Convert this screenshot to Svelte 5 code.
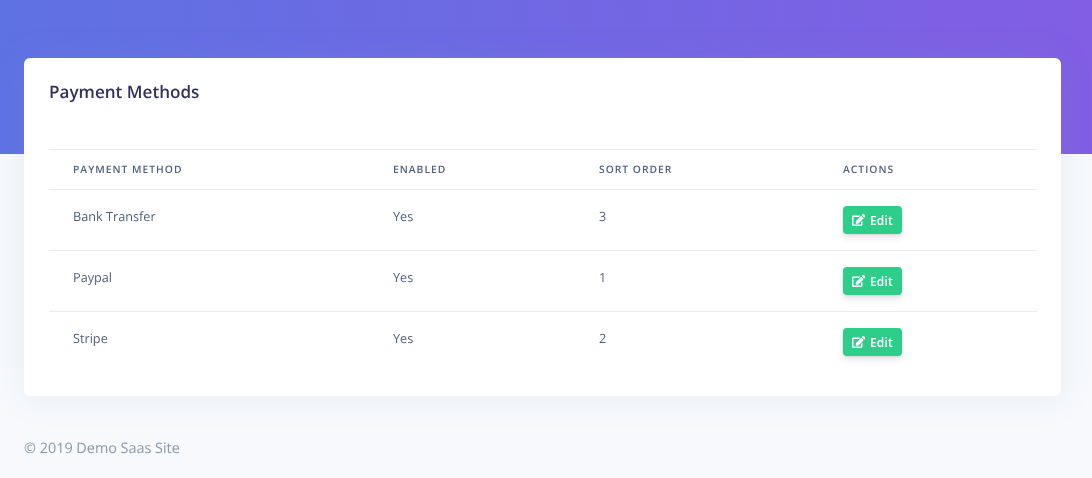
<script>
  const rows = [
    { name: 'Bank Transfer', enabled: 'Yes', order: 3 },
    { name: 'Paypal', enabled: 'Yes', order: 1 },
    { name: 'Stripe', enabled: 'Yes', order: 2 }
  ];
</script>

<div class="page">
  <div class="hero"></div>
  <main class="content">
    <section class="card">
      <h1>Payment Methods</h1>
      <table>
        <thead>
          <tr>
            <th class="c1">Payment Method</th>
            <th class="c2">Enabled</th>
            <th class="c3">Sort Order</th>
            <th class="c4">Actions</th>
          </tr>
        </thead>
        <tbody>
          {#each rows as row}
            <tr>
              <td>{row.name}</td>
              <td>{row.enabled}</td>
              <td>{row.order}</td>
              <td>
                <button type="button">
                  <svg viewBox="0 0 576 512" aria-hidden="true"><path fill="currentColor" d="M402.6 83.2l90.2 90.2c3.8 3.8 3.8 10 0 13.8L274.4 405.6l-92.8 10.3c-12.4 1.4-22.9-9.1-21.5-21.5l10.3-92.8L388.8 83.2c3.8-3.8 10-3.8 13.8 0zm162-22.9l-48.8-48.8c-15.2-15.2-39.9-15.2-55.2 0l-35.4 35.4c-3.8 3.8-3.8 10 0 13.8l90.2 90.2c3.8 3.8 10 3.8 13.8 0l35.4-35.4c15.2-15.3 15.2-40 0-55.2zM384 346.2V448H64V128h229.8c3.2 0 6.2-1.3 8.5-3.5l40-40c7.6-7.6 2.2-20.5-8.5-20.5H48C21.5 64 0 85.5 0 112v352c0 26.5 21.5 48 48 48h352c26.5 0 48-21.5 48-48V306.2c0-10.7-12.9-16-20.5-8.5l-40 40c-2.2 2.3-3.5 5.3-3.5 8.5z"/></svg>
                  <span>Edit</span>
                </button>
              </td>
            </tr>
          {/each}
        </tbody>
      </table>
    </section>
    <footer>© 2019 Demo Saas Site</footer>
  </main>
</div>

<style>
  :global(body) {
    margin: 0;
    background: #f7f9fd;
    font-family: "Open Sans", sans-serif;
    text-rendering: geometricPrecision;
  }
  .page {
    height: 478px;
    overflow: hidden;
  }
  .hero {
    height: 154px;
    background: linear-gradient(87deg, #5e72e4 0%, #825ee4 100%);
  }
  .content {
    margin-top: -96px;
    padding: 0 31px 0 24px;
    will-change: transform;
  }
  .card {
    box-sizing: border-box;
    height: 338px;
    padding: 24px 24px 24px 25px;
    background: #fff;
    border-radius: 6px;
    box-shadow: 0 0 32px rgba(136, 152, 170, 0.15);
  }
  h1 {
    margin: 0 0 46px;
    padding-top: 1px;
    height: 20px;
    font-size: 17.1px;
    line-height: 20px;
    font-weight: 600;
    color: #32325d;
  }
  table {
    width: 100%;
    table-layout: fixed;
    border-collapse: collapse;
  }
  th {
    height: 40px;
    padding: 0 0 0 24px;
    text-align: left;
    font-size: 10.3px;
    font-weight: 600;
    letter-spacing: 1px;
    text-transform: uppercase;
    color: #525f7f;
    border-top: 1px solid #e9ecef;
    border-bottom: 1px solid #e9ecef;
  }
  .c1 { width: 320px; box-sizing: border-box; }
  .c2 { width: 206px; box-sizing: border-box; }
  .c3 { width: 244px; box-sizing: border-box; }
  .c4 { box-sizing: border-box; }
  td {
    box-sizing: border-box;
    height: 61px;
    padding: 0 0 8px 24px;
    vertical-align: middle;
    font-size: 12.7px;
    color: #525f7f;
    border-bottom: 1px solid #e9ecef;
  }
  tbody tr:last-child td {
    border-bottom: 0;
  }
  button {
    display: flex;
    align-items: center;
    gap: 4.5px;
    box-sizing: border-box;
    width: 59px;
    height: 28px;
    margin-top: 8px;
    padding: 0 9px;
    border: 0;
    border-radius: 4px;
    background: #2dce89;
    color: #fff;
    font-family: inherit;
    font-size: 12px;
    font-weight: 600;
    letter-spacing: 0.2px;
    box-shadow: 0 4px 6px rgba(50, 50, 93, 0.11), 0 1px 3px rgba(0, 0, 0, 0.08);
  }
  svg {
    width: 13.5px;
    height: 12px;
  }
  footer {
    margin-top: 43px;
    font-size: 14.4px;
    line-height: 20px;
    color: #8898aa;
  }
</style>
